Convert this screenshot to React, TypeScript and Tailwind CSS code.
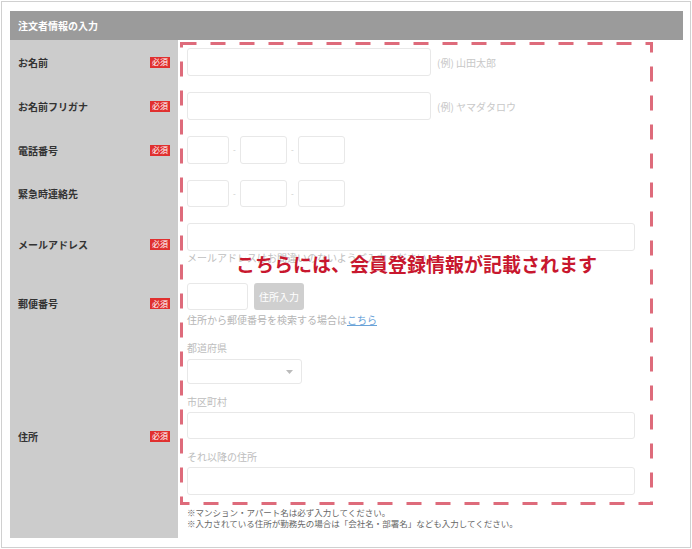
import React from 'react';

const font = { fontFamily: '"Noto Sans CJK JP", "Noto Sans", sans-serif' };

const Badge = () => (
  <span className="flex h-[11px] w-[20px] items-center justify-center bg-[#e0302f] text-[8px] leading-none text-white">
    必須
  </span>
);

const Input = ({ className = '' }: { className?: string }) => (
  <div className={`rounded-[3px] border border-[#e8e8e8] bg-white ${className}`} />
);

const Row = ({
  label,
  required,
  height,
  children,
}: {
  label: string;
  required?: boolean;
  height: string;
  children: React.ReactNode;
}) => (
  <div className={`flex ${height}`}>
    <div className="flex w-[168px] shrink-0 items-center justify-between bg-[#cccccc] pl-[8px] pr-[8px]">
      <span className="text-[10px] font-bold text-[#333333]">{label}</span>
      {required && <Badge />}
    </div>
    <div className="flex-1 bg-white pl-[9px]">{children}</div>
  </div>
);

const Dash = () => (
  <span className="flex w-[11px] justify-center text-[8px] text-[#c8c8c8]">-</span>
);

export default function App() {
  return (
    <div className="relative h-[549px] w-[692px] bg-white" style={font}>
      <div className="ml-px mt-px h-[547px] w-[690px] border border-[#d0d0d0] pl-[8px] pt-[9px]">
        {/* Header */}
        <div className="flex h-[29px] w-[673px] items-center bg-[#9b9b9b] pl-[8px]">
          <span className="text-[10px] font-bold text-white">注文者情報の入力</span>
        </div>

        <div className="flex w-[673px] flex-col">
          <Row label="お名前" required height="h-[44px]">
            <div className="flex items-center pt-[8px]">
              <Input className="h-[28px] w-[244px]" />
              <span className="ml-[6px] text-[10px] text-[#c8c8c8]">(例) 山田太郎</span>
            </div>
          </Row>

          <Row label="お名前フリガナ" required height="h-[44px]">
            <div className="flex items-center pt-[8px]">
              <Input className="h-[28px] w-[244px]" />
              <span className="ml-[6px] text-[10px] text-[#c8c8c8]">(例) ヤマダタロウ</span>
            </div>
          </Row>

          <Row label="電話番号" required height="h-[44px]">
            <div className="flex items-center pt-[8px]">
              <Input className="h-[28px] w-[42px]" />
              <Dash />
              <Input className="h-[28px] w-[47px]" />
              <Dash />
              <Input className="h-[28px] w-[47px]" />
            </div>
          </Row>

          <Row label="緊急時連絡先" height="h-[43px]">
            <div className="flex items-center pt-[8px]">
              <Input className="h-[27px] w-[42px]" />
              <Dash />
              <Input className="h-[27px] w-[47px]" />
              <Dash />
              <Input className="h-[27px] w-[47px]" />
            </div>
          </Row>

          <Row label="メールアドレス" required height="h-[58px]">
            <div className="pt-[8px]">
              <Input className="h-[28px] w-[448px]" />
              <p className="mt-[1px] text-[10px] leading-[12px] text-[#c0c0c0]">
                メールアドレスはお間違いのないようご入力ください。
              </p>
            </div>
          </Row>

          <Row label="郵便番号" required height="h-[61px]">
            <div className="pt-[10px]">
              <div className="flex items-center">
                <Input className="h-[27px] w-[61px]" />
                <button className="ml-[6px] h-[27px] w-[50px] rounded-[3px] bg-[#cfcfcf] text-[10px] text-white">
                  住所入力
                </button>
              </div>
              <p className="mt-[4px] text-[10px] leading-[12px] text-[#b5b5b5]">
                住所から郵便番号を検索する場合は
                <span className="text-[#6aa3d8] underline">こちら</span>
              </p>
            </div>
          </Row>

          <Row label="住所" required height="h-[204px]">
            <div className="pt-[8px]">
              <p className="text-[10px] leading-[12px] text-[#bdbdbd]">都道府県</p>
              <div className="mt-[5px] flex h-[25px] w-[115px] items-center justify-end rounded-[3px] border border-[#e8e8e8] bg-white pr-[8px]">
                <svg width="7" height="4" viewBox="0 0 7 4">
                  <path d="M0 0 L7 0 L3.5 4 Z" fill="#bbbbbb" />
                </svg>
              </div>
              <p className="mt-[12px] text-[10px] leading-[12px] text-[#bdbdbd]">市区町村</p>
              <Input className="mt-[4px] h-[27px] w-[448px]" />
              <p className="mt-[12px] text-[10px] leading-[12px] text-[#bdbdbd]">それ以降の住所</p>
              <Input className="mt-[4px] h-[28px] w-[448px]" />
              <p className="mt-[12px] text-[8.5px] leading-[11px] text-[#666666]">
                ※マンション・アパート名は必ず入力してください。
              </p>
              <p className="text-[8.5px] leading-[11px] text-[#666666]">
                ※入力されている住所が勤務先の場合は「会社名・部署名」なども入力してください。
              </p>
            </div>
          </Row>
        </div>
      </div>

      {/* Dashed overlay */}
      <svg
        className="pointer-events-none absolute left-[180px] top-[41px]"
        width="473"
        height="463"
        viewBox="0 0 473 463"
      >
        <rect
          x="1.5"
          y="1.5"
          width="470"
          height="460"
          fill="none"
          stroke="#de6b7b"
          strokeWidth="3"
          strokeDasharray="15 14"
        />
      </svg>

      <div className="pointer-events-none absolute left-[180px] top-[251px] flex w-[473px] justify-center">
        <span className="text-[19px] font-bold leading-[24px] text-[#c8172e]">
          こちらには、会員登録情報が記載されます
        </span>
      </div>
    </div>
  );
}
